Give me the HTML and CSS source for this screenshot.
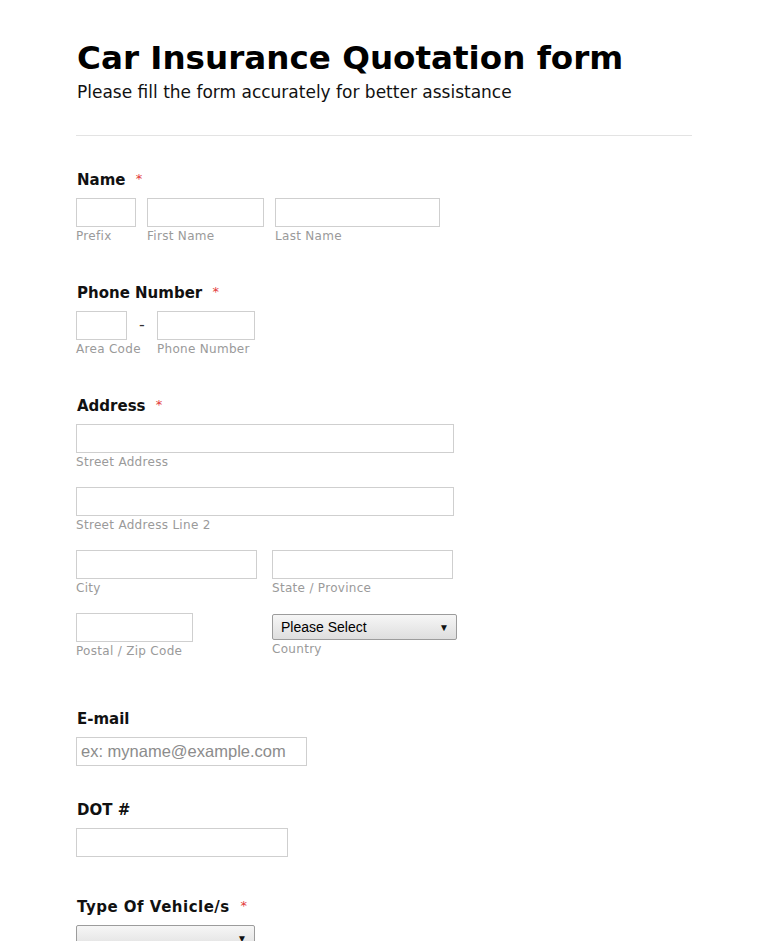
FILE: index.html
```html
<!DOCTYPE html>
<html>
<head>
<meta charset="utf-8">
<link rel="stylesheet" href="styles.css">
</head>
<body>
<div class="form">
  <div class="header">
    <h1 class="title">Car Insurance Quotation form</h1>
    <div class="subtitle">Please fill the form accurately for better assistance</div>
  </div>

  <div class="field f-name">
    <div class="label">Name <span class="req">*</span></div>
    <div class="row">
      <div class="part"><div class="box w60"></div><div class="sub">Prefix</div></div>
      <div class="part"><div class="box w117"></div><div class="sub">First Name</div></div>
      <div class="part"><div class="box w165"></div><div class="sub">Last Name</div></div>
    </div>
  </div>

  <div class="field f-phone">
    <div class="label">Phone Number <span class="req">*</span></div>
    <div class="row phone">
      <div class="part"><div class="box w51"></div><div class="sub">Area Code</div></div>
      <div class="dash">-</div>
      <div class="part"><div class="box w98"></div><div class="sub">Phone Number</div></div>
    </div>
  </div>

  <div class="field f-address">
    <div class="label">Address <span class="req">*</span></div>
    <div class="addr">
      <div class="part"><div class="box w378"></div><div class="sub">Street Address</div></div>
      <div class="part"><div class="box w378"></div><div class="sub">Street Address Line 2</div></div>
      <div class="grid">
        <div class="part"><div class="box w181"></div><div class="sub">City</div></div>
        <div class="part"><div class="box w181"></div><div class="sub">State / Province</div></div>
      </div>
      <div class="grid">
        <div class="part"><div class="box w117"></div><div class="sub">Postal / Zip Code</div></div>
        <div class="part"><div class="select w185"><span>Please Select</span><span class="arrow">▼</span></div><div class="sub sub-sel">Country</div></div>
      </div>
    </div>
  </div>

  <div class="field f-email">
    <div class="label">E-mail</div>
    <div class="box w231 ph">ex: myname@example.com</div>
  </div>

  <div class="field f-dot">
    <div class="label">DOT #</div>
    <div class="box w212"></div>
  </div>

  <div class="field f-type">
    <div class="label label-wide">Type Of Vehicle/s <span class="req">*</span></div>
    <div class="select w179"><span></span><span class="arrow">▼</span></div>
  </div>
</div>
</body>
</html>
```
FILE: styles.css
```css
html, body {
  margin: 0;
  padding: 0;
  background: #fff;
}
body {
  font-family: "DejaVu Sans", Verdana, sans-serif;
  color: #000;
  overflow: hidden;
}
.form {
  width: 616px;
  margin-left: 76px;
  padding-top: 35px;
}
.header {
  padding-left: 1px;
  padding-bottom: 33px;
  border-bottom: 1px solid #e3e3e3;
}
.title {
  margin: 0;
  font-size: 32.6px;
  line-height: 46px;
  font-weight: bold;
}
.subtitle {
  font-size: 17px;
  line-height: 20px;
  margin-top: 1px;
  color: #111;
}
.label {
  font-size: 15px;
  font-weight: bold;
  line-height: 20px;
  padding-left: 1px;
  color: #111;
  margin-bottom: 8px;
}
.label-wide {
  letter-spacing: 0.5px;
}
.req {
  color: #e33a3a;
  font-size: 13px;
  font-weight: normal;
  margin-left: 5px;
  vertical-align: 2px;
  letter-spacing: 0;
}
.row {
  display: flex;
  gap: 11px;
}
.row.phone {
  gap: 0;
}
.grid {
  display: grid;
  grid-template-columns: 181px 185px;
  column-gap: 15px;
  align-items: start;
}
.part {
  display: flex;
  flex-direction: column;
}
.dash {
  width: 30px;
  text-align: center;
  font-size: 16px;
  line-height: 28px;
  color: #333;
}
.box {
  box-sizing: border-box;
  height: 29px;
  border: 1px solid #cfcfcf;
  background: #fff;
}
.sub {
  width: 0;
  white-space: nowrap;
  font-size: 12px;
  letter-spacing: 0.3px;
  line-height: 15px;
  color: #9a9a9a;
  padding-top: 2px;
}
.w60 { width: 60px; }
.w117 { width: 117px; }
.w165 { width: 165px; }
.w51 { width: 51px; }
.w98 { width: 98px; }
.w378 { width: 378px; }
.w181 { width: 181px; }
.w185 { width: 185px; }
.w231 { width: 231px; }
.w212 { width: 212px; }
.w179 { width: 179px; }

.f-name { margin-top: 33px; }
.f-phone { margin-top: 38px; }
.f-address { margin-top: 38px; }
.addr {
  display: flex;
  flex-direction: column;
  gap: 17px;
}
.f-email { margin-top: 50px; }
.f-dot { margin-top: 34px; }
.f-type { margin-top: 39px; }

.select {
  box-sizing: border-box;
  height: 26px;
  margin-top: 1px;
  border: 1px solid #9c9c9c;
  border-radius: 2px;
  background: linear-gradient(#f6f6f6, #dedede);
  display: flex;
  align-items: center;
  justify-content: space-between;
  padding: 0 7px 0 8px;
  font-family: "Liberation Sans", Arial, sans-serif;
  font-size: 14px;
  color: #000;
}
.arrow {
  font-size: 10px;
  color: #111;
}
.ph {
  font-family: "Liberation Sans", Arial, sans-serif;
  font-size: 16.5px;
  color: #8c8c8c;
  line-height: 27px;
  padding-left: 4px;
}
```
